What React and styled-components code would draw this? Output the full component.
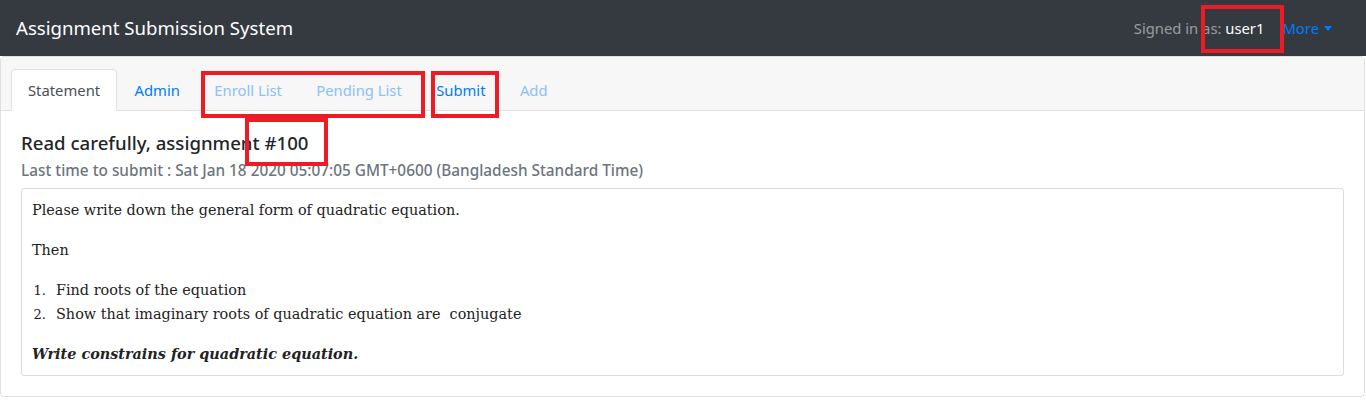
import React from "react";
import styled, { createGlobalStyle } from "styled-components";

const GlobalStyle = createGlobalStyle`
  * { box-sizing: border-box; }
  body {
    margin: 0;
    background: #fff;
    font-family: "Noto Sans", "Open Sans", sans-serif;
    color: #212529;
  }
`;

const Page = styled.div`
  position: relative;
  width: 1366px;
`;

const Navbar = styled.nav`
  height: 56px;
  background: #343a40;
  display: flex;
  align-items: center;
  justify-content: space-between;
  padding: 0 34px 0 16px;
`;

const Brand = styled.span`
  color: #fff;
  font-size: 18.6px;
  line-height: 30px;
`;

const NavRight = styled.div`
  display: flex;
  align-items: center;
  font-size: 14.8px;
`;

const SignedIn = styled.span`
  color: rgba(255, 255, 255, 0.5);
  margin-right: 18px;
  b {
    color: #fff;
    font-weight: 400;
  }
`;

const MoreLink = styled.span`
  color: #007bff;
  &::after {
    content: "";
    display: inline-block;
    margin-left: 5px;
    vertical-align: 3px;
    border-top: 5px solid;
    border-left: 4px solid transparent;
    border-right: 4px solid transparent;
  }
`;

const Card = styled.div`
  width: 1365px;
  border: 1px solid rgba(0, 0, 0, 0.125);
  border-radius: 4px;
`;

const CardHeader = styled.div`
  background: #f7f7f7;
  border-bottom: 1px solid #dee2e6;
  padding: 12px 10px 0;
`;

const Tabs = styled.ul`
  display: flex;
  list-style: none;
  margin: 0 0 -1px;
  padding: 0;
`;

const Tab = styled.li`
  padding: 8px 16px;
  margin-right: 0.4px;
  line-height: 24px;
  font-size: 14.8px;
  border: 1px solid ${(p) => (p.$active ? "#dee2e6" : "transparent")};
  border-bottom-color: ${(p) => (p.$active ? "#fff" : "transparent")};
  border-radius: 4px 4px 0 0;
  background: ${(p) => (p.$active ? "#fff" : "transparent")};
  color: ${(p) =>
    p.$active ? "#495057" : p.$muted ? "#8cc0f8" : "#007bff"};
`;

const CardBody = styled.div`
  padding: 20px;
`;

const Title = styled.h5`
  margin: 0 0 12px;
  font-size: 18.6px;
  font-weight: 500;
  line-height: 24px;
`;

const Subtitle = styled.h6`
  margin: -6px 0 8px;
  font-size: 15.35px;
  font-weight: 500;
  line-height: 19.2px;
  color: #6c757d;
`;

const Statement = styled.div`
  border: 1px solid #dcdcdc;
  border-radius: 3px;
  padding: 9px 10px;
  font-family: "DejaVu Serif", "Liberation Serif", serif;
  font-size: 14.4px;
  line-height: 24px;
  color: #222;
  p {
    margin: 0 0 16px;
  }
  p:last-child {
    margin-bottom: 0;
  }
  ol {
    margin: 0 0 16px;
    padding-left: 18px;
  }
  li {
    padding-left: 6px;
  }
  li::marker {
    font-size: 13px;
  }
`;

const Emphasis = styled.p`
  font-weight: 700;
  font-style: italic;
`;

const Annotation = styled.div`
  position: absolute;
  left: ${(p) => p.$x}px;
  top: ${(p) => p.$y}px;
  width: ${(p) => p.$w}px;
  height: ${(p) => p.$h}px;
  border: 4px solid #ed1c24;
  pointer-events: none;
`;

const tabs = [
  { label: "Statement", active: true },
  { label: "Admin" },
  { label: "Enroll List", muted: true },
  { label: "Pending List", muted: true },
  { label: "Submit" },
  { label: "Add", muted: true },
];

const marks = [
  { x: 201, y: 71, w: 224, h: 47 },
  { x: 431, y: 71, w: 68, h: 47 },
  { x: 245, y: 118, w: 83, h: 48 },
  { x: 1201, y: 5, w: 83, h: 48 },
];

const App = () => {
  return (
    <Page>
      <GlobalStyle />
      <Navbar>
        <Brand>Assignment Submission System</Brand>
        <NavRight>
          <SignedIn>
            Signed in as: <b>user1</b>
          </SignedIn>
          <MoreLink>More</MoreLink>
        </NavRight>
      </Navbar>
      <Card>
        <CardHeader>
          <Tabs>
            {tabs.map((t) => (
              <Tab key={t.label} $active={t.active} $muted={t.muted}>
                {t.label}
              </Tab>
            ))}
          </Tabs>
        </CardHeader>
        <CardBody>
          <Title>Read carefully, assignment #100</Title>
          <Subtitle>
            Last time to submit : Sat Jan 18 2020 05:07:05 GMT+0600
            (Bangladesh Standard Time)
          </Subtitle>
          <Statement>
            <p>Please write down the general form of quadratic equation.</p>
            <p>Then</p>
            <ol>
              <li>Find roots of the equation</li>
              <li>Show that imaginary roots of quadratic equation are&nbsp; conjugate</li>
            </ol>
            <Emphasis>Write constrains for quadratic equation.</Emphasis>
          </Statement>
        </CardBody>
      </Card>
      {marks.map((m, i) => (
        <Annotation key={i} $x={m.x} $y={m.y} $w={m.w} $h={m.h} />
      ))}
    </Page>
  );
};

export default App;
